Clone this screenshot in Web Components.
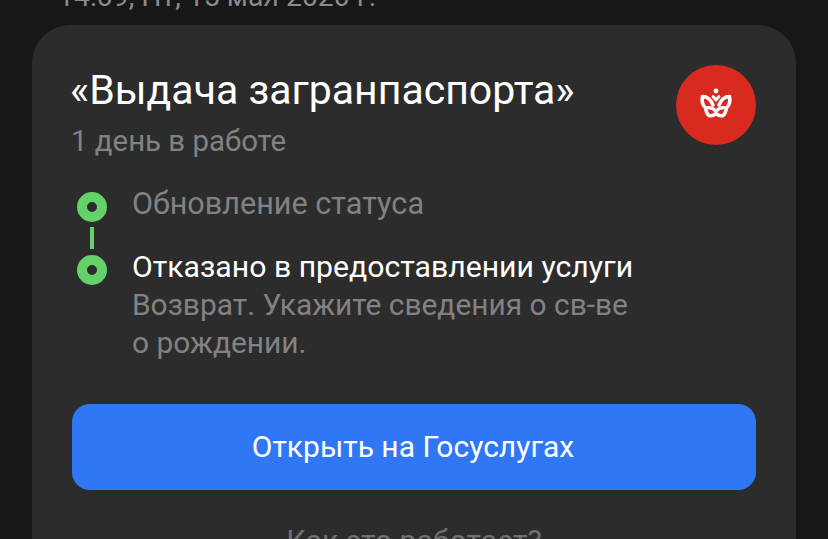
<!DOCTYPE html>
<html lang="ru">
<head>
<meta charset="utf-8">
<title>Выдача загранпаспорта</title>
<style>
  html, body { margin: 0; height: 100%; overflow: hidden; background: #171717; }
  body { font-family: Roboto, "Open Sans", sans-serif; }
</style>
</head>
<body>
<chat-page>
  <span slot="before">14:09, Пт, 15 мая 2020 г.</span>
  <status-card heading="«Выдача загранпаспорта»" sub="1 день в работе">
    <agency-logo slot="logo"></agency-logo>
    <status-step muted>Обновление статуса</status-step>
    <status-step last>
      Отказано в предоставлении услуги
      <span slot="note">Возврат. Укажите сведения о св-ве<br>о рождении.</span>
    </status-step>
    <action-button slot="action">Открыть на Госуслугах</action-button>
    <span slot="help">Как это работает?</span>
  </status-card>
</chat-page>

<script>
class ChatPage extends HTMLElement {
  connectedCallback() {
    this.attachShadow({ mode: 'open' });
    this.shadowRoot.innerHTML = `
      <style>
        :host { display: block; height: 539px; overflow: hidden; }
        .before {
          margin-top: -18px;
          height: 43px;
          padding-left: 58px;
          font-size: 28.4px;
          line-height: 30px;
          color: #8b8b8b;
          white-space: nowrap;
        }
        .wrap { padding: 0 32px; }
      </style>
      <div class="before"><slot name="before"></slot></div>
      <div class="wrap"><slot></slot></div>
    `;
  }
}

class StatusCard extends HTMLElement {
  connectedCallback() {
    this.attachShadow({ mode: 'open' });
    this.shadowRoot.innerHTML = `
      <style>
        :host { display: block; background: #2c2c2c; border-radius: 38px; padding: 40px 40px 60px; color: #fff; }
        .top { display: flex; justify-content: space-between; align-items: flex-start; }
        h2 { margin: 0 0 0 -2px; font-size: 41px; line-height: 50px; font-weight: 400; white-space: nowrap; }
        .sub { font-size: 29.4px; line-height: 34px; margin: 9px 0 0 -1px; color: #828282; }
        .steps { margin-top: 27px; display: flex; flex-direction: column; }
        .action { margin-top: 42px; }
        .help { margin-top: 34px; text-align: center; font-size: 30.2px; line-height: 34px; color: #707070; }
      </style>
      <div class="top">
        <div>
          <h2></h2>
          <div class="sub"></div>
        </div>
        <slot name="logo"></slot>
      </div>
      <div class="steps"><slot></slot></div>
      <div class="action"><slot name="action"></slot></div>
      <div class="help"><slot name="help"></slot></div>
    `;
    this.shadowRoot.querySelector('h2').textContent = this.getAttribute('heading');
    this.shadowRoot.querySelector('.sub').textContent = this.getAttribute('sub');
  }
}

class AgencyLogo extends HTMLElement {
  connectedCallback() {
    this.attachShadow({ mode: 'open' });
    this.shadowRoot.innerHTML = `
      <style>
        :host { display: flex; width: 80px; height: 80px; border-radius: 50%; background: #d92a1f; align-items: center; justify-content: center; }
        svg { display: block; }
      </style>
      <svg width="40" height="40" viewBox="0 0 40 40" fill="none" stroke="#fff" stroke-linecap="round" stroke-linejoin="round">
        <circle cx="20" cy="6" r="2.4" fill="#fff" stroke="none"/>
        <path d="M17 11.500 L20 15 L23 11.500" stroke-width="2.800"/>
        <path d="M17 20 C15 15 11 11.500 6.500 11.500 C5.500 16 6.500 20 9.500 23 C10 26 11 29 13 30.500 C15.500 31 18 30.500 20 28.500 C22 30.500 24.500 31 27 30.500 C29 29 30 26 30.500 23 C33.500 20 34.500 16 33.500 11.500 C29 11.500 25 15 23 20" stroke-width="3.600"/>
        <path d="M9.500 23 C13 22 17 23 20 26 C23 23 27 22 30.500 23" stroke-width="3.200"/>
      </svg>
    `;
  }
}

class StatusStep extends HTMLElement {
  connectedCallback() {
    this.attachShadow({ mode: 'open' });
    const last = this.hasAttribute('last');
    this.shadowRoot.innerHTML = `
      <style>
        :host { display: grid; grid-template-columns: 40px 1fr; column-gap: 20px; color: #fff; font-size: 30.2px; line-height: 38px; }
        :host([muted]) { color: #828282; font-size: 30.6px; }
        .rail { display: flex; flex-direction: column; align-items: center; }
        .dot { width: 30px; height: 30px; box-sizing: border-box; border-radius: 50%; border: 10px solid #65d16b; background: #2c2c2c; margin-top: 7px; flex: none; }
        .line { width: 4px; height: 22px; background: #65d16b; margin-top: 5px; margin-bottom: -1px; }
        .text { padding-bottom: ${last ? '0' : '25px'}; }
        .note { color: #828282; font-size: 29.9px; }
      </style>
      <div class="rail">
        <div class="dot"></div>
        ${last ? '' : '<div class="line"></div>'}
      </div>
      <div class="text"><slot></slot><div class="note"><slot name="note"></slot></div></div>
    `;
  }
}

class ActionButton extends HTMLElement {
  connectedCallback() {
    this.attachShadow({ mode: 'open' });
    this.shadowRoot.innerHTML = `
      <style>
        :host { display: block; }
        button {
          display: block; width: 100%; height: 86px; border: 0; border-radius: 18px; padding: 0 2px 2px 0;
          background: #3077f6; color: #fff; font: inherit; font-size: 30px; cursor: pointer;
        }
      </style>
      <button><slot></slot></button>
    `;
  }
}

customElements.define('chat-page', ChatPage);
customElements.define('status-card', StatusCard);
customElements.define('agency-logo', AgencyLogo);
customElements.define('status-step', StatusStep);
customElements.define('action-button', ActionButton);
</script>
</body>
</html>
